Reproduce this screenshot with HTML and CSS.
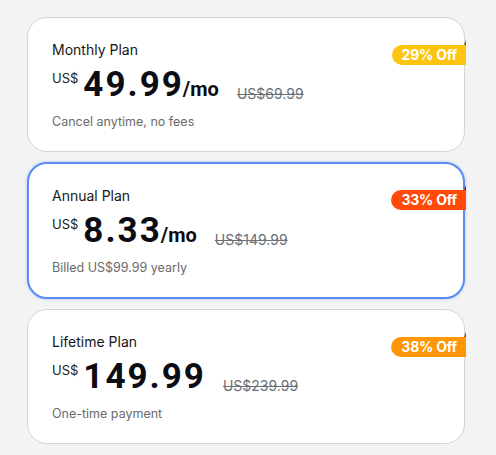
FILE: index.html
```html
<!DOCTYPE html>
<html lang="en">

<head>
  <meta charset="UTF-8">
  <meta name="viewport" content="width=device-width, initial-scale=1.0">
  <title>Plans</title>
  <link rel="stylesheet" href="styles.css">
</head>

<body>
  <div class="plans">
    <!--월간-->
    <div class="card">
      <span class="badge yellow">29% Off</span>
      <p class="title">Monthly Plan</p>
      <div class="price">
        <span class="cur">US$</span>
        <span class="amount">49.99</span>
        <span class="unit">/mo</span>
        <span class="old">US$69.99</span>
      </div>
      <p class="desc">Cancel anytime, no fees</p>
    </div>

    <!--연간 (선택됨)-->
    <div class="card active">
      <span class="badge red">33% Off</span>
      <p class="title">Annual Plan</p>
      <div class="price">
        <span class="cur">US$</span>
        <span class="amount">8.33</span>
        <span class="unit">/mo</span>
        <span class="old">US$149.99</span>
      </div>
      <p class="desc">Billed US$99.99 yearly</p>
    </div>

    <!--평생-->
    <div class="card">
      <span class="badge orange">38% Off</span>
      <p class="title">Lifetime Plan</p>
      <div class="price">
        <span class="cur">US$</span>
        <span class="amount">149.99</span>
        <span class="old">US$239.99</span>
      </div>
      <p class="desc">One-time payment</p>
    </div>
  </div>
</body>

</html>
```

FILE: styles.css
```css
body {
  margin: 0;
  background: #f3f3f3;
  font-family: Inter, "Noto Sans", sans-serif;
  color: #111;
}

.plans {
  display: flex;
  flex-direction: column;
  gap: 10px;
  width: 438px;
  padding: 17px 0 0 27px;
}

/*카드*/
.card {
  position: relative;
  box-sizing: border-box;
  height: 135px;
  padding: 22px 24px 0;
  background: #fff;
  border: 1px solid #d4d4d4;
  border-radius: 20px;
}

.card.active {
  height: 137px;
  border: 2px solid #5b8cf3;
  padding: 22px 23px 0;
  box-shadow: 0 0 3px rgba(91, 140, 243, .5);
}

.title {
  margin: 0;
  font-size: 14px;
  line-height: 20px;
  color: #161616;
}

.price {
  display: flex;
  align-items: baseline;
  margin-top: 4px;
  height: 42px;
}

.cur {
  align-self: flex-start;
  margin-top: 6px;
  margin-right: 5px;
  font-size: 13px;
  color: #222;
}

.amount {
  margin-right: -1px;
  font-family: Roboto, sans-serif;
  font-weight: 700;
  font-size: 35px;
  letter-spacing: 2px;
  color: #0c0c14;
}

.unit {
  font-family: Roboto, sans-serif;
  font-weight: 700;
  font-size: 20px;
  color: #0c0c14;
}

.old {
  margin-left: 18px;
  font-size: 14px;
  color: #6b6f78;
  text-decoration: line-through;
  transform: translateY(3px);
}

.desc {
  margin: 8px 0 0;
  font-size: 12.5px;
  color: #6b6b6b;
}

/*할인 뱃지*/
.badge {
  position: absolute;
  top: 27px;
  right: -2px;
  padding: 0 9px 0 10px;
  height: 20px;
  line-height: 20px;
  border-radius: 10px 0 0 10px;
  font-size: 14px;
  font-weight: 700;
  letter-spacing: -0.2px;
  color: #fff;
}

.badge::after {
  content: "";
  position: absolute;
  right: 0;
  top: -5px;
  border-left: 2px solid transparent;
  border-bottom: 5px solid #7a5a00;
}

.card.active .badge {
  right: -3px;
  top: 26px;
}

.yellow {
  background: #fdc50f;
}

.red {
  background: #ff4a0a;
}

.red::after {
  border-bottom-color: #8a1800;
}

.orange {
  background: #ff9705;
}

.orange::after {
  border-bottom-color: #8a4c00;
}
```
